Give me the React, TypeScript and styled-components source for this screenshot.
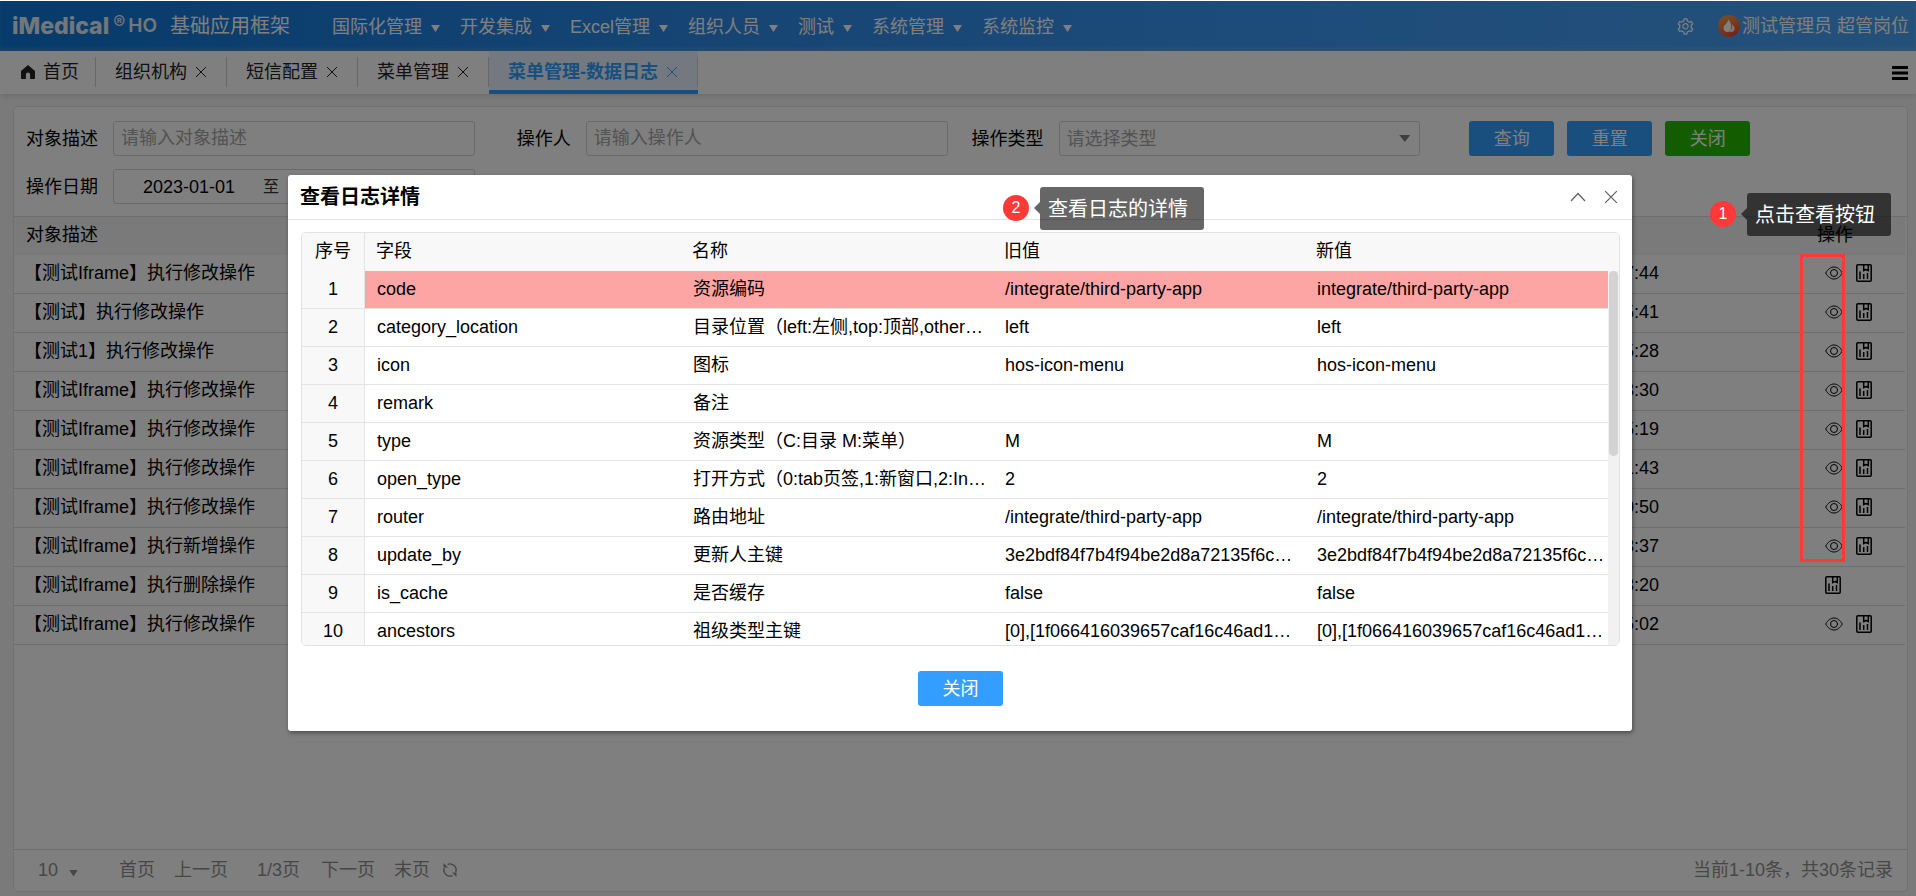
import React from 'react';
import styled, { createGlobalStyle, css } from 'styled-components';
import { AiOutlineSetting } from 'react-icons/ai';

const GlobalStyle = createGlobalStyle`
  *, *::before, *::after { box-sizing: border-box; }
  html, body, #root { height: 100%; }
  body {
    margin: 0;
    background: #fff;
    color: #000;
    font: 18px/24px "Liberation Sans", "Noto Sans CJK SC", sans-serif;
    overflow: hidden;
  }
  button, input, select { font: inherit; color: inherit; }
  button { border: 0; background: none; padding: 0; cursor: pointer; }
`;

/* ---------- page frame ---------- */

const Page = styled.div`
  position: relative;
  display: flex;
  flex-direction: column;
  min-height: 100vh;
  padding-top: 1px;
`;

const Header = styled.header`
  display: flex;
  align-items: center;
  height: 50px;
  padding: 0 7px 0 12px;
  color: #fff;
  background: linear-gradient(90deg, #0d76d6 0%, #2f8ce8 40%, #3c98f4 65%, #48a2f5 100%);
  box-shadow: inset 0 -3px 3px rgba(255, 255, 255, 0.12);
`;

const Logo = styled.div`
  display: flex;
  align-items: center;
  width: 158px;
  font-family: Inter, "Liberation Sans", sans-serif;
  font-size: 23px;
  font-weight: 800;
  color: #e6eef7;
`;

const Registered = styled.sup`
  align-self: flex-start;
  margin: 0 3px 0 4px;
  font-size: 18px;
  font-weight: 400;
  line-height: 18px;
`;

const LogoSuffix = styled.span`
  font-size: 19px;
  font-weight: 600;
`;

const ProductName = styled.span`
  width: 162px;
  font-size: 20px;
`;

const Menu = styled.nav`
  display: flex;
  flex: 1;
  gap: 20px;
  padding-top: 2px;
`;

const MenuItem = styled.button`
  display: flex;
  align-items: center;
  gap: 9px;
  white-space: nowrap;
`;

const Caret = styled.span<{ $color?: string }>`
  width: 9px;
  height: 7px;
  margin-top: 3px;
  background: ${(p) => p.$color ?? 'currentColor'};
  clip-path: polygon(0 0, 100% 0, 50% 100%);
`;

const UserArea = styled.div`
  display: flex;
  align-items: center;
  gap: 23px;
`;

const User = styled.button`
  display: flex;
  align-items: center;
  gap: 2px;
`;

/* ---------- tabs ---------- */

const TabBar = styled.nav`
  position: relative;
  display: flex;
  align-items: stretch;
  height: 43px;
  background: #fff;
  box-shadow: 0 2px 6px rgba(0, 0, 0, 0.12);
`;

const Tab = styled.div<{ $active?: boolean; $home?: boolean }>`
  position: relative;
  display: flex;
  align-items: center;
  gap: 8px;
  padding: ${(p) => (p.$home ? '0 17px 2px 20px' : '0 20px 2px 19px')};
  color: #222;

  &::after {
    content: "";
    position: absolute;
    right: 0;
    top: 6px;
    bottom: 7px;
    width: 1px;
    background: #d0d0d0;
  }

  ${(p) =>
    p.$active &&
    css`
      color: #339eff;
      font-weight: 700;
      background: #e6f3ff;
      box-shadow: inset 0 -4px #339eff;
    `}
`;

const TabLabel = styled.button`
  display: flex;
  align-items: center;
  gap: 7px;
  font-weight: inherit;
`;

const IconButton = styled.button`
  display: flex;
  align-items: center;
  justify-content: center;
`;

const TabListButton = styled(IconButton)`
  margin: 0 8px 0 auto;
`;

/* ---------- content card ---------- */

const Content = styled.main`
  display: flex;
  flex: 1;
  padding: 12px 8px 4px 13px;
  background: #f5f5f5;
`;

const Card = styled.section`
  display: flex;
  flex: 1;
  flex-direction: column;
  border: 1px solid #e2e2e2;
  border-radius: 5px;
  background: #fff;
`;

const Filters = styled.form`
  display: grid;
  grid-template-columns: repeat(4, 1fr);
  row-gap: 13px;
  padding: 14px 2px 12px 0;
`;

const Field = styled.div`
  display: grid;
  grid-template-columns: 84px 1fr;
  column-gap: 15px;
  align-items: center;
  height: 35px;
  padding-right: 12px;

  label { text-align: right; }
`;

const inputBox = css`
  width: 100%;
  height: 35px;
  border: 1px solid #d3d5d9;
  border-radius: 3px;
  background: #fff;
  outline: none;
`;

const TextInput = styled.input`
  ${inputBox}
  padding: 0 7px;
  &::placeholder { color: #a6a6a6; opacity: 1; }
`;

const SelectWrap = styled.div`
  position: relative;
  ${Caret} {
    position: absolute;
    right: 10px;
    top: 11px;
    width: 11px;
    pointer-events: none;
  }
`;

const Select = styled.select`
  ${inputBox}
  appearance: none;
  padding: 0 7px;
  color: #a6a6a6;
`;

const DateRange = styled.div`
  ${inputBox}
  display: flex;
  align-items: center;
  padding: 0 10px;
`;

const DateInput = styled.input`
  flex: 1;
  min-width: 0;
  max-width: 130px;
  border: 0;
  background: none;
  text-align: center;
  outline: none;
`;

const DateTo = styled.span`
  margin-left: 9px;
  font-size: 16px;
  color: #333;
`;

const Actions = styled.div`
  display: flex;
  gap: 13px;
  padding-left: 37px;
`;

const Button = styled.button<{ $tone?: string }>`
  width: 85px;
  height: 35px;
  border-radius: 3px;
  color: #fff;
  background: ${(p) => p.$tone ?? '#339eff'};
`;

/* ---------- log list ---------- */

const ListArea = styled.div`
  flex: 1;
  padding-right: 2px;
  border-top: 1px solid #dcdcdc;
`;

const LogTable = styled.table`
  width: 100%;
  border-collapse: separate;
  border-spacing: 0;
  table-layout: fixed;

  th, td {
    height: 39px;
    padding: 0 12px 2px;
    text-align: left;
    font-weight: 400;
    white-space: nowrap;
  }
  th { background: #f5f5f5; height: 38px; }
  td { border-bottom: 1px solid #dcdcdc; }
  td:first-child { padding-left: 10px; }
`;

const WideCol = styled.col``;
const TimeCol = styled.col` width: 188px; `;
const OpCol = styled.col` width: 105px; `;

const OpIcons = styled.div`
  display: flex;
  align-items: center;
  gap: 13px;
  padding-left: 13px;
`;

const OpHead = styled.span` padding-left: 5px; `;

const Pager = styled.footer`
  display: flex;
  align-items: center;
  height: 42px;
  padding: 0 14px 2px 24px;
  color: #8f8f8f;
  border-top: 1px solid #dcdcdc;
`;

const PageSize = styled.div`
  position: relative;
  width: 81px;

  select {
    width: 42px;
    padding: 0;
    border: 0;
    outline: none;
    appearance: none;
    background: none;
  }
  ${Caret} { position: absolute; left: 31px; top: 9px; pointer-events: none; }
`;

const PageLinks = styled.div`
  display: flex;
  gap: 19px;
`;

const PageNumber = styled.span` margin: 0 2px 0 10px; `;
const Refresh = styled(IconButton)` margin-left: 12px; `;
const Total = styled.span` margin-left: auto; `;

/* ---------- dialog ---------- */

const Overlay = styled.div`
  position: absolute;
  inset: 1px 0 0;
  display: flex;
  align-items: flex-start;
  justify-content: center;
  padding: 174px 0 0 4px;
  background: rgba(0, 0, 0, 0.5);
`;

const Dialog = styled.section`
  width: 1344px;
  max-width: 94%;
  border-radius: 3px;
  background: #fff;
  box-shadow: 1px 2px 4px rgba(0, 0, 0, 0.4);
`;

const DialogHead = styled.header`
  display: flex;
  align-items: center;
  gap: 18px;
  height: 45px;
  padding: 0 14px 0 12px;
  border-bottom: 1px solid #e2e2e2;

  button { color: #5f5f5f; }
`;

const DialogTitle = styled.h2`
  flex: 1;
  margin: 0;
  font-size: 20px;
  font-weight: 700;
`;

const DialogBody = styled.div`
  padding: 12px 12px 25px 13px;
`;

const DetailBox = styled.div`
  position: relative;
  height: 414px;
  overflow: hidden;
  border: 1px solid #e2e2e2;
  border-radius: 5px;
`;

const DetailTable = styled.table`
  width: 100%;
  border-collapse: separate;
  border-spacing: 0;
  table-layout: fixed;

  th, td {
    height: 38px;
    padding: 0 0 2px 12px;
    text-align: left;
    font-weight: 400;
    white-space: nowrap;
  }
  th { padding-left: 11px; background: #f8f8f8; }
  td { border-bottom: 1px solid #e4e4e4; }
  th:first-child, td:first-child {
    padding-left: 0;
    text-align: center;
    background: #f8f8f8;
    border-right: 1px solid #e4e4e4;
  }
  td:last-child { border-bottom: 0; background: #f1f1f1; }
  th:last-child, td:last-child { padding: 0; }
`;

const DetailRow = styled.tr<{ $changed?: boolean }>`
  background: ${(p) => (p.$changed ? '#fda5a5' : '#fff')};
`;

const FixedCol = styled.col<{ $w: number }>` width: ${(p) => p.$w}px; `;

const Thumb = styled.div`
  position: absolute;
  right: 1px;
  top: 38px;
  width: 9px;
  height: 185px;
  border-radius: 5px;
  background: #d3d3d3;
`;

const DialogFoot = styled.footer`
  display: flex;
  justify-content: center;
  padding-top: 25px;
`;

/* ---------- guide marks ---------- */

const Guide = styled.div<{ $x: string; $top: number }>`
  position: absolute;
  ${(p) => p.$x};
  top: ${(p) => p.$top}px;
  display: flex;
  align-items: flex-start;
  color: #fff;
  white-space: nowrap;
`;

const Badge = styled.span`
  width: 26px;
  height: 26px;
  margin: 8px 5px 0 0;
  border-radius: 50%;
  background: #ff3838;
  font-size: 16px;
  line-height: 25px;
  text-align: center;
`;

const Arrow = styled.span`
  width: 6px;
  height: 12px;
  margin-top: 15px;
  background: rgba(0, 0, 0, 0.6);
  clip-path: polygon(100% 0, 100% 100%, 0 50%);
`;

const Tip = styled.span`
  height: 43px;
  padding: 0 16px 0 8px;
  border-radius: 3px;
  background: rgba(0, 0, 0, 0.6);
  font-size: 20px;
  line-height: 44px;
`;

const Highlight = styled.div`
  position: absolute;
  top: 254px;
  right: 71px;
  width: 45px;
  height: 308px;
  border: 3px solid #ff3838;
`;

/* ---------- icons ---------- */

const CloseIcon = ({ size = 12 }: { size?: number }) => (
  <svg width={size} height={size} viewBox="0 0 12 12" fill="none" stroke="currentColor" strokeWidth="1">
    <path d="M1 1 11 11M11 1 1 11" />
  </svg>
);

const Avatar = () => (
  <svg width="22" height="22" viewBox="0 0 22 22">
    <defs>
      <linearGradient id="flame" x1="0.2" y1="0" x2="0.7" y2="1">
        <stop offset="0" stopColor="#f6a04a" />
        <stop offset="1" stopColor="#e4472f" />
      </linearGradient>
    </defs>
    <circle cx="11" cy="11" r="11" fill="url(#flame)" />
    <path d="M10.500 4.500c2 2.600 3 5 2.800 7.500-.2 3-1.600 5-3.700 5S5.500 15.500 5.500 13.200c0-3.200 4-4.700 5-8.700z" fill="#fff" />
    <path d="M14.300 9c1.500 1.800 2.400 3.200 2.400 4.800 0 2-1.300 3.200-3.200 3.200-1 0-1.700-.3-2.200-.8 2.200-1.500 3-4 3-7.200z" fill="#ffe9dc" />
  </svg>
);

const HomeIcon = () => (
  <svg width="16" height="14" viewBox="0 0 15 14" fill="#222">
    <path d="M7.500 0 14.500 6v7.200a.8.8 0 0 1-.8.8H9.600V9.500a2.100 2.100 0 0 0-4.200 0V14H1.300a.8.8 0 0 1-.8-.8V6z" />
  </svg>
);

const BarsIcon = () => (
  <svg width="16" height="14" viewBox="0 0 16 14" fill="#000">
    <path d="M0 0h16v3H0zM0 5.500h16v3H0zM0 11h16v3H0z" />
  </svg>
);

const EyeIcon = () => (
  <svg width="18" height="14" viewBox="0 0 18 14" fill="none" stroke="#000" strokeWidth="1">
    <path d="M.7 7C3 3 5.800 1 9 1s6 2 8.300 6C15 11 12.200 13 9 13S3 11 .7 7z" />
    <circle cx="9" cy="7" r="3.500" />
  </svg>
);

const DataIcon = () => (
  <svg width="16" height="18" viewBox="0 0 16 18" fill="none" stroke="#000" strokeWidth="1.500">
    <rect x=".8" y=".8" width="14.400" height="16.400" rx="1" />
    <path d="M7.700 1v5.500l2.200-1h.2l2.200 1V1M4 7.500v7.500M7.700 10v5M11.500 9v6" />
  </svg>
);

const RefreshIcon = () => (
  <svg width="16" height="16" viewBox="0 0 16 16" fill="none" stroke="currentColor" strokeWidth="1.400">
    <path d="M5.500 2.400A6.200 6.200 0 0 1 13.800 10M10.500 13.600A6.200 6.200 0 0 1 2.200 6" />
    <path d="M1.500 1v4.500H6zM14.500 15v-4.500H10z" fill="currentColor" stroke="none" />
  </svg>
);

const UpIcon = () => (
  <svg width="16" height="10" viewBox="0 0 16 10" fill="none" stroke="currentColor" strokeWidth="1.200">
    <path d="M1 9 8 1.500 15 9" />
  </svg>
);

/* ---------- data ---------- */

const menus = ['国际化管理', '开发集成', 'Excel管理', '组织人员', '测试', '系统管理', '系统监控'];
const tabs = ['组织机构', '短信配置', '菜单管理', '菜单管理-数据日志'];

const logs: [string, string, boolean][] = [
  ['【测试Iframe】执行修改操作', '7:44', true],
  ['【测试】执行修改操作', '5:41', true],
  ['【测试1】执行修改操作', '5:28', true],
  ['【测试Iframe】执行修改操作', '3:30', true],
  ['【测试Iframe】执行修改操作', '5:19', true],
  ['【测试Iframe】执行修改操作', '1:43', true],
  ['【测试Iframe】执行修改操作', '0:50', true],
  ['【测试Iframe】执行新增操作', '3:37', true],
  ['【测试Iframe】执行删除操作', '3:20', false],
  ['【测试Iframe】执行修改操作', '5:02', true],
];

const details: [string, string, string, string][] = [
  ['code', '资源编码', '/integrate/third-party-app', 'integrate/third-party-app'],
  ['category_location', '目录位置（left:左侧,top:顶部,other…', 'left', 'left'],
  ['icon', '图标', 'hos-icon-menu', 'hos-icon-menu'],
  ['remark', '备注', '', ''],
  ['type', '资源类型（C:目录 M:菜单）', 'M', 'M'],
  ['open_type', '打开方式（0:tab页签,1:新窗口,2:In…', '2', '2'],
  ['router', '路由地址', '/integrate/third-party-app', '/integrate/third-party-app'],
  ['update_by', '更新人主键', '3e2bdf84f7b4f94be2d8a72135f6c…', '3e2bdf84f7b4f94be2d8a72135f6c…'],
  ['is_cache', '是否缓存', 'false', 'false'],
  ['ancestors', '祖级类型主键', '[0],[1f066416039657caf16c46ad1…', '[0],[1f066416039657caf16c46ad1…'],
];

export default function App() {
  return (
    <>
      <GlobalStyle />
      <Page>
        <Header>
          <Logo>
            iMedical<Registered>®</Registered>
            <LogoSuffix>HO</LogoSuffix>
          </Logo>
          <ProductName>基础应用框架</ProductName>
          <Menu>
            {menus.map((m) => (
              <MenuItem key={m}>
                {m}
                <Caret />
              </MenuItem>
            ))}
          </Menu>
          <UserArea>
            <IconButton aria-label="设置"><AiOutlineSetting size={19} /></IconButton>
            <User><Avatar />测试管理员 超管岗位</User>
          </UserArea>
        </Header>

        <TabBar>
          <Tab $home>
            <TabLabel><HomeIcon />首页</TabLabel>
          </Tab>
          {tabs.map((t, i) => (
            <Tab key={t} $active={i === tabs.length - 1}>
              <TabLabel>{t}</TabLabel>
              <IconButton aria-label={`关闭${t}`}><CloseIcon /></IconButton>
            </Tab>
          ))}
          <TabListButton aria-label="标签列表"><BarsIcon /></TabListButton>
        </TabBar>

        <Content>
          <Card>
            <Filters onSubmit={(e) => e.preventDefault()}>
              <Field>
                <label htmlFor="target">对象描述</label>
                <TextInput id="target" placeholder="请输入对象描述" />
              </Field>
              <Field>
                <label htmlFor="operator">操作人</label>
                <TextInput id="operator" placeholder="请输入操作人" />
              </Field>
              <Field>
                <label htmlFor="kind">操作类型</label>
                <SelectWrap>
                  <Select id="kind" defaultValue="">
                    <option value="">请选择类型</option>
                  </Select>
                  <Caret $color="#7d7d7d" />
                </SelectWrap>
              </Field>
              <Actions>
                <Button type="submit">查询</Button>
                <Button type="reset">重置</Button>
                <Button type="button" $tone="#28b800">关闭</Button>
              </Actions>
              <Field>
                <label htmlFor="from">操作日期</label>
                <DateRange>
                  <DateInput id="from" defaultValue="2023-01-01" />
                  <DateTo>至</DateTo>
                </DateRange>
              </Field>
            </Filters>

            <ListArea>
              <LogTable>
                <colgroup>
                  <WideCol />
                  <TimeCol />
                  <OpCol />
                </colgroup>
                <thead>
                  <tr>
                    <th>对象描述</th>
                    <th aria-label="操作时间" />
                    <th><OpHead>操作</OpHead></th>
                  </tr>
                </thead>
                <tbody>
                  {logs.map(([name, time, viewable], i) => (
                    <tr key={i}>
                      <td>{name}</td>
                      <td>{time}</td>
                      <td>
                        <OpIcons>
                          {viewable && <IconButton aria-label="查看"><EyeIcon /></IconButton>}
                          <IconButton aria-label="数据"><DataIcon /></IconButton>
                        </OpIcons>
                      </td>
                    </tr>
                  ))}
                </tbody>
              </LogTable>
            </ListArea>

            <Pager>
              <PageSize>
                <select aria-label="每页条数" defaultValue="10"><option>10</option></select>
                <Caret />
              </PageSize>
              <PageLinks>
                <button>首页</button>
                <button>上一页</button>
                <PageNumber>1/3页</PageNumber>
                <button>下一页</button>
                <button>末页</button>
              </PageLinks>
              <Refresh aria-label="刷新"><RefreshIcon /></Refresh>
              <Total>当前1-10条，共30条记录</Total>
            </Pager>
          </Card>
        </Content>

        <Overlay>
          <Dialog role="dialog" aria-labelledby="dialog-title">
            <DialogHead>
              <DialogTitle id="dialog-title">查看日志详情</DialogTitle>
              <IconButton aria-label="收起"><UpIcon /></IconButton>
              <IconButton aria-label="关闭"><CloseIcon size={14} /></IconButton>
            </DialogHead>
            <DialogBody>
              <DetailBox>
                <DetailTable>
                  <colgroup>
                    <FixedCol $w={63} />
                    <FixedCol $w={316} />
                    <FixedCol $w={312} />
                    <FixedCol $w={312} />
                    <WideCol />
                    <FixedCol $w={11} />
                  </colgroup>
                  <thead>
                    <tr>
                      <th>序号</th>
                      <th>字段</th>
                      <th>名称</th>
                      <th>旧值</th>
                      <th>新值</th>
                      <th aria-hidden="true" />
                    </tr>
                  </thead>
                  <tbody>
                    {details.map((row, i) => (
                      <DetailRow key={row[0]} $changed={i === 0}>
                        <td>{i + 1}</td>
                        {row.map((value, j) => <td key={j}>{value}</td>)}
                        <td aria-hidden="true" />
                      </DetailRow>
                    ))}
                  </tbody>
                </DetailTable>
                <Thumb />
              </DetailBox>
              <DialogFoot>
                <Button>关闭</Button>
              </DialogFoot>
            </DialogBody>
          </Dialog>
        </Overlay>

        <Highlight />
        <Guide $x="right: 25px" $top={193}>
          <Badge>1</Badge><Arrow /><Tip>点击查看按钮</Tip>
        </Guide>
        <Guide $x="left: calc(50% + 45px)" $top={187}>
          <Badge>2</Badge><Arrow /><Tip>查看日志的详情</Tip>
        </Guide>
      </Page>
    </>
  );
}
